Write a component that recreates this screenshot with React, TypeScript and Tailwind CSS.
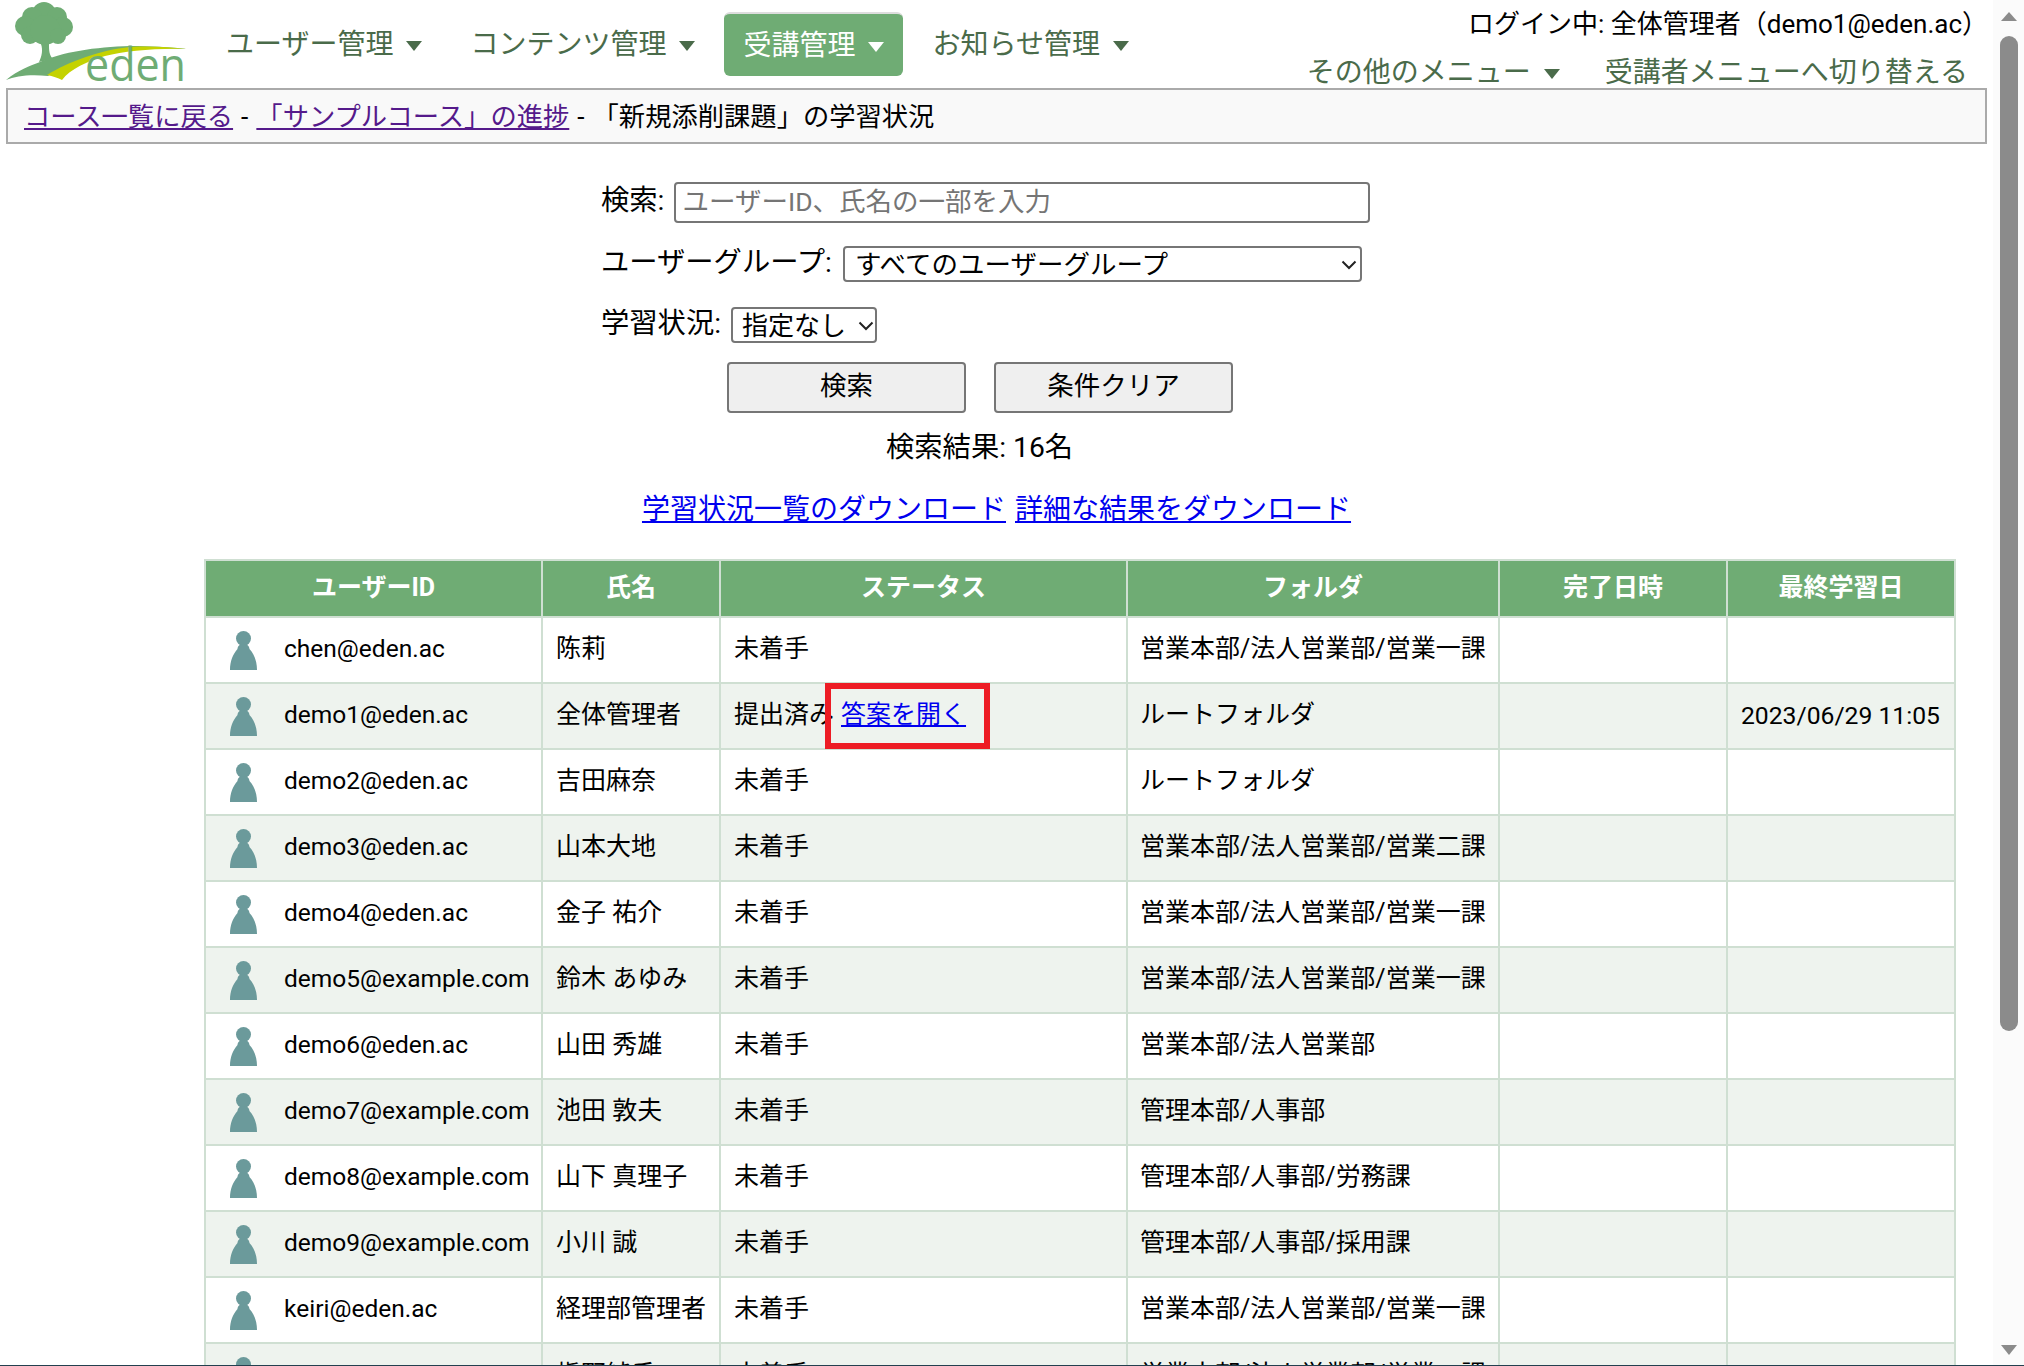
const rows = [
  ["chen@eden.ac", "陈莉", "未着手", "営業本部/法人営業部/営業一課", ""],
  ["demo1@eden.ac", "全体管理者", "提出済み", "ルートフォルダ", "2023/06/29 11:05"],
  ["demo2@eden.ac", "吉田麻奈", "未着手", "ルートフォルダ", ""],
  ["demo3@eden.ac", "山本大地", "未着手", "営業本部/法人営業部/営業二課", ""],
  ["demo4@eden.ac", "金子 祐介", "未着手", "営業本部/法人営業部/営業一課", ""],
  ["demo5@example.com", "鈴木 あゆみ", "未着手", "営業本部/法人営業部/営業一課", ""],
  ["demo6@eden.ac", "山田 秀雄", "未着手", "営業本部/法人営業部", ""],
  ["demo7@example.com", "池田 敦夫", "未着手", "管理本部/人事部", ""],
  ["demo8@example.com", "山下 真理子", "未着手", "管理本部/人事部/労務課", ""],
  ["demo9@example.com", "小川 誠", "未着手", "管理本部/人事部/採用課", ""],
  ["keiri@eden.ac", "経理部管理者", "未着手", "営業本部/法人営業部/営業一課", ""],
  ["makino@eden.ac", "槇野純香", "未着手", "営業本部/法人営業部/営業一課", ""],
];

const headers = ["ユーザーID", "氏名", "ステータス", "フォルダ", "完了日時", "最終学習日"];

const Caret = ({ white }: { white?: boolean }) => (
  <svg width="16" height="10" viewBox="0 0 16 10" className="ml-[13px] mt-[2px] shrink-0">
    <path d="M0 0H16L8 10Z" fill={white ? "#ffffff" : "#4a6b4a"} />
  </svg>
);

const Logo = () => (
  <svg width="197" height="88" viewBox="0 0 197 88" className="shrink-0 overflow-visible">
    <path d="M41 44 L49 44 C49 50 49 55 53 59 L39 62 C42 56 43 50 41 44Z" fill="#6fac74" />
    <g fill="#6fac74">
      <circle cx="44" cy="14" r="12" />
      <circle cx="32" cy="17" r="10" />
      <circle cx="57" cy="17" r="10" />
      <circle cx="25" cy="26" r="10" />
      <circle cx="63" cy="27" r="10" />
      <circle cx="30" cy="35" r="9" />
      <circle cx="45" cy="30" r="15" />
      <circle cx="58" cy="36" r="8" />
    </g>
    <path d="M6 80 C18 70 30 66 40 62 C62 52 95 47 130 46 C150 46 170 47 187 49 C150 47 110 51 90 57 C74 63 58 70 48 76 C30 74 16 76 6 80Z" fill="#6fac74" />
    <path d="M47 75 C68 62 100 50 130 47 C150 46 170 47 187 49 C155 48 125 51 105 56 C88 61 70 69 62 80 C58 78 53 76 47 75Z" fill="#c4d200" />
    <text x="85" y="81" fontSize="45" fill="#6fac74" textLength="101" lengthAdjust="spacingAndGlyphs" style={{ fontFamily: "'Open Sans', sans-serif", fontWeight: 400 }}>eden</text>
  </svg>
);

const Person = () => (
  <svg width="27" height="39" viewBox="0 0 27 39" className="shrink-0">
    <circle cx="13.5" cy="7.5" r="7.5" fill="#6b9a9b" />
    <path d="M13.5 13 C9 13 7.5 16 7.5 18 C3 23 0 30 0 39 H27 C27 30 24 23 19.5 18 C19.5 16 18 13 13.5 13Z" fill="#6b9a9b" />
  </svg>
);

const Chevron = ({ className }: { className: string }) => (
  <svg width="16" height="10" viewBox="0 0 16 10" className={className}>
    <path d="M1.5 1.5L8 8L14.5 1.5" fill="none" stroke="#222222" strokeWidth="2" />
  </svg>
);

const navItems = ["ユーザー管理", "コンテンツ管理", "受講管理", "お知らせ管理"];

export default function App() {
  return (
    <div
      className="flex h-[1366px] w-[2024px] overflow-hidden border-b border-[#23404f] bg-white text-[25px] leading-[34px] text-black"
      style={{ fontFamily: "Roboto, 'Noto Sans CJK JP', sans-serif" }}
    >
      <div className="flex-1 min-w-0">
        <header className="flex h-[88px] justify-between">
          <div className="flex">
            <div className="pr-[10px]"><Logo /></div>
            <nav className="flex h-[64px] mt-[12px] gap-[10px] text-[28px] text-[#4a6b4a]">
              {navItems.map((item, i) => (
                <div
                  key={item}
                  className={
                    i === 2
                      ? "flex items-center px-[19px] pt-[1px] rounded-[6px] border-t-2 border-[#dddddd] bg-[#6fac74] text-white"
                      : "flex items-center px-[19px] pt-[2px]"
                  }
                >
                  {item}
                  <Caret white={i === 2} />
                </div>
              ))}
            </nav>
          </div>
          <div className="flex flex-col items-end pr-[5px] pt-[7px]">
            <div className="h-[34px] text-[26px]">ログイン中: 全体管理者（demo1@eden.ac）</div>
            <div className="flex items-center mt-[15px] pr-[20px] text-[28px] text-[#4a6b4a]">
              <span className="flex items-center">その他のメニュー<Caret /></span>
              <span className="ml-[45px]">受講者メニューへ切り替える</span>
            </div>
          </div>
        </header>

        <div className="mx-[6px] flex h-[56px] items-center border-2 border-[#aaaaaa] bg-[#f9f9f9] pl-[16px] pt-[1px] text-[26.3px]">
          <a href="#" className="text-[#551a8b] underline">コース一覧に戻る</a>
          <span className="mx-[8px]">-</span>
          <a href="#" className="text-[#551a8b] underline">「サンプルコース」の進捗</a>
          <span className="mx-[8px]">-</span>
          <span>「新規添削課題」の学習状況</span>
        </div>

        <form className="ml-[601px] mt-[38px] w-[769px] text-[28.3px]">
          <div className="flex h-[41px] items-center gap-[10px]">
            <label className="pb-[3px]">検索:</label>
            <input
              placeholder="ユーザーID、氏名の一部を入力"
              className="h-[41px] flex-1 rounded-[4px] border-2 border-[#767676] px-[6px] pb-[3px] text-[26.5px] placeholder:text-[#757575]"
            />
          </div>
          <div className="mt-[23px] flex h-[36px] items-center gap-[11px]">
            <label className="pb-[3px]">ユーザーグループ:</label>
            <div className="relative">
              <select className="h-[36px] w-[519px] appearance-none rounded-[4px] border-2 border-[#767676] bg-white pl-[10px] pb-[3px] text-[26.5px]">
                <option>すべてのユーザーグループ</option>
              </select>
              <Chevron className="pointer-events-none absolute top-[14px] right-[5px]" />
            </div>
          </div>
          <div className="mt-[25px] flex h-[36px] items-center gap-[10px]">
            <label className="pb-[3px]">学習状況:</label>
            <div className="relative">
              <select className="h-[36px] w-[146px] appearance-none rounded-[4px] border-2 border-[#767676] bg-white pl-[9px] pb-[3px] text-[26px]">
                <option>指定なし</option>
              </select>
              <Chevron className="pointer-events-none absolute top-[14px] right-[3px]" />
            </div>
          </div>
          <div className="mt-[19px] ml-[126px] flex gap-[28px] text-[26.5px]">
            <button type="button" className="h-[51px] w-[239px] rounded-[4px] border-2 border-[#767676] bg-[#efefef] pb-[4px]">検索</button>
            <button type="button" className="h-[51px] w-[239px] rounded-[4px] border-2 border-[#767676] bg-[#efefef] pb-[4px]">条件クリア</button>
          </div>
          <div className="mt-[18px] ml-[285px] h-[38px]">検索結果: 16名</div>
        </form>

        <div className="mt-[24px] flex justify-center gap-[9px] text-[28px] text-[#0000ee] underline">
          <a href="#">学習状況一覧のダウンロード</a>
          <a href="#">詳細な結果をダウンロード</a>
        </div>

        <table className="ml-[204px] mt-[32px] w-[1750px] table-fixed border-collapse">
          <colgroup>
            <col className="w-[337px]" />
            <col className="w-[178px]" />
            <col className="w-[407px]" />
            <col className="w-[372px]" />
            <col className="w-[228px]" />
            <col className="w-[228px]" />
          </colgroup>
          <thead>
            <tr className="h-[57px] bg-[#6fac74] text-white">
              {headers.map((h) => (
                <th key={h} className="border-2 border-[#cfdfd2] pb-[2px] font-bold">{h}</th>
              ))}
            </tr>
          </thead>
          <tbody>
            {rows.map((r, i) => (
              <tr key={r[0]} className={i % 2 === 1 ? "h-[66px] bg-[#eef3ee]" : "h-[66px] bg-white"}>
                <td className="border-2 border-[#cfdfd2] px-[13px] whitespace-nowrap">
                  <div className="flex items-center gap-[27px] pl-[11px]">
                    <Person />
                    <span className="pb-[3px] text-[24.5px]">{r[0]}</span>
                  </div>
                </td>
                <td className="border-2 border-[#cfdfd2] px-[13px] pb-[3px] whitespace-nowrap">{r[1]}</td>
                <td className="border-2 border-[#cfdfd2] px-[13px] pb-[3px] whitespace-nowrap">
                  {i === 1 ? (
                    <div className="relative">
                      {r[2]}
                      <a href="#" className="ml-[7px] text-[#0000ee] underline">答案を開く</a>
                      <span className="absolute left-[91px] top-[-15px] h-[66px] w-[165px] border-[6px] border-[#ed1c24]" />
                    </div>
                  ) : r[2]}
                </td>
                <td className="border-2 border-[#cfdfd2] pl-[12px] pr-[13px] pb-[3px] whitespace-nowrap">{r[3]}</td>
                <td className="border-2 border-[#cfdfd2] px-[13px]" />
                <td className="border-2 border-[#cfdfd2] px-[13px] text-[24.7px] whitespace-nowrap">{r[4]}</td>
              </tr>
            ))}
          </tbody>
        </table>
      </div>

      <aside className="flex w-[31px] shrink-0 flex-col items-center bg-[#fbfbfb]">
        <svg width="16" height="9" viewBox="0 0 16 9" className="mt-[12px]"><path d="M8 0L16 9H0Z" fill="#8b8b8b" /></svg>
        <div className="mt-[15px] h-[995px] w-[18px] rounded-full bg-[#8b8b8b]" />
        <svg width="16" height="10" viewBox="0 0 16 10" className="mt-[314px]"><path d="M0 0H16L8 10Z" fill="#8b8b8b" /></svg>
      </aside>
    </div>
  );
}
